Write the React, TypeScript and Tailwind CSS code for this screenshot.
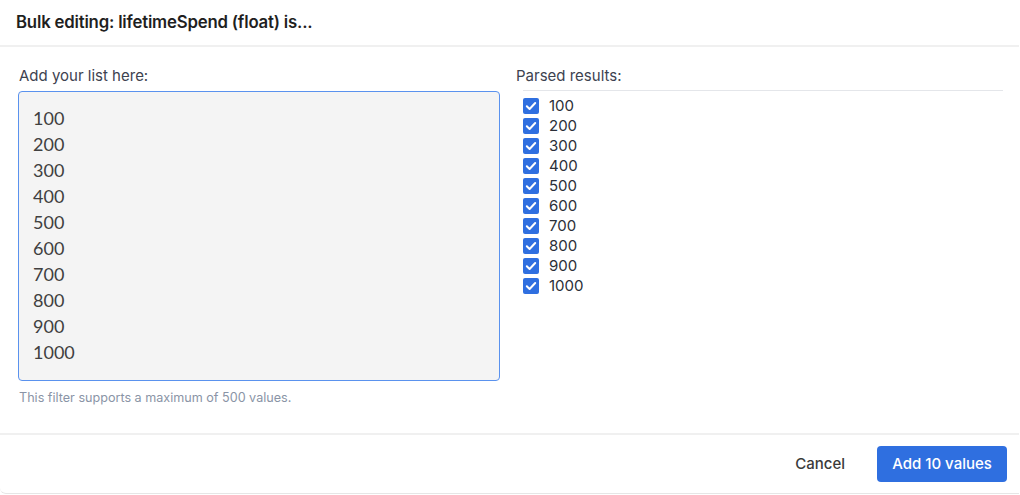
import { useState } from "react";

const values = ["100", "200", "300", "400", "500", "600", "700", "800", "900", "1000"];

function CheckIcon() {
  return (
    <svg viewBox="0 0 16 16" className="h-4 w-4">
      <rect x="0" y="0" width="16" height="16" rx="2" fill="#2f6fe0" />
      <path d="M3.8 8.2l2.8 2.8 5.6-6" fill="none" stroke="#fff" strokeWidth="2" strokeLinecap="round" strokeLinejoin="round" />
    </svg>
  );
}

export default function App() {
  const [text, setText] = useState(values.join("\n"));
  const parsed = text.split("\n").map((v) => v.trim()).filter(Boolean);

  return (
    <div
      className="w-[1020px] h-[495px] bg-white text-[#1f1f1f] overflow-hidden"
      style={{ fontFamily: "Inter, 'Open Sans', sans-serif" }}
    >
      <div className="w-[1019px] h-[494px] flex flex-col rounded-bl-md border-b border-[#e6e6e6]">
        <div className="h-[47px] flex items-center px-4 border-b-2 border-[#f0f0f0]">
          <h2 className="text-[16.8px] font-semibold tracking-[-0.2px]">
            Bulk editing: lifetimeSpend (float) is...
          </h2>
        </div>

        <div className="flex-1 flex gap-4 pl-[18px] pr-4 pt-[19px]">
          <div className="w-[482px] flex flex-col">
            <label className="text-[15px] text-[#3d4250] pl-px leading-5 mb-[5px]">
              Add your list here:
            </label>
            <textarea
              value={text}
              onChange={(e) => setText(e.target.value)}
              spellCheck={false}
              className="h-[290px] w-full resize-none rounded-[4px] border border-[#5a92ee] bg-[#f4f4f4] px-[14px] pt-[13px] text-[18px] leading-[26px] text-[#404040] outline-none"
              style={{ fontFamily: "Lato, 'Open Sans', sans-serif" }}
            />
            <p className="mt-[8px] pl-px text-[12.6px] text-[#8a94a6]">
              This filter supports a maximum of 500 values.
            </p>
          </div>

          <div className="flex-1 flex flex-col">
            <span className="text-[15px] text-[#3d4250] leading-5">Parsed results:</span>
            <div className="ml-[7px] mt-[4px] border-t border-[#e4e6ea] pt-[5px] flex flex-col">
              {parsed.map((v) => (
                <div key={v} className="h-5 flex items-center gap-[10px]">
                  <CheckIcon />
                  <span className="text-[15px] text-[#2b2f38]">{v}</span>
                </div>
              ))}
            </div>
          </div>
        </div>

        <div className="h-[60px] flex items-center justify-end gap-4 px-3 border-t-2 border-[#f0f0f0]">
          <button className="px-[16px] h-9 text-[15px] font-medium text-[#3a3a3a]">Cancel</button>
          <button className="h-9 w-[130px] rounded-[4px] bg-[#2f6fe0] text-[15px] font-medium text-white">
            Add {parsed.length} values
          </button>
        </div>
      </div>
    </div>
  );
}
